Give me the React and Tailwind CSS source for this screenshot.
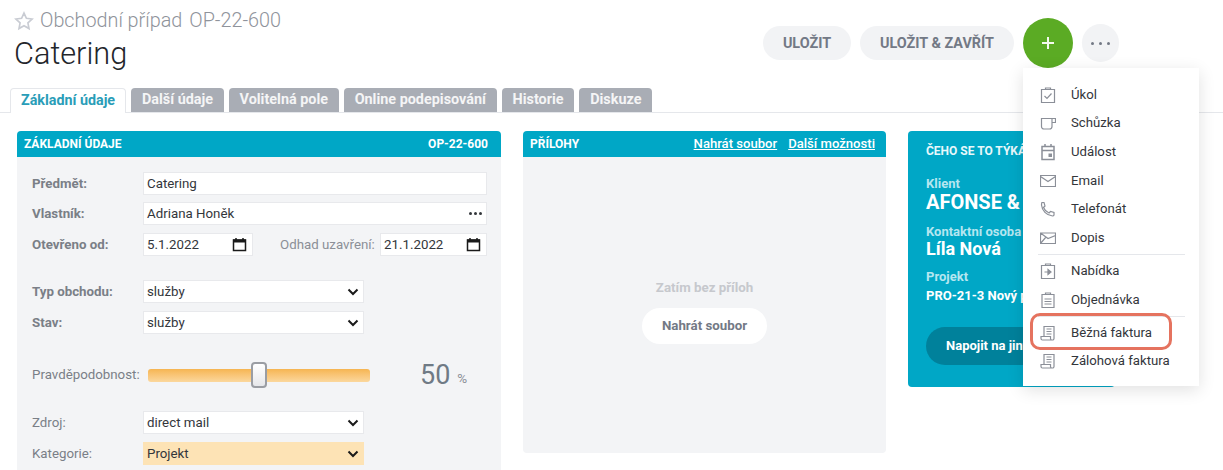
import React from 'react';

const tabs = ['Další údaje', 'Volitelná pole', 'Online podepisování', 'Historie', 'Diskuze'];

// menu icons, all drawn on the same 16x18 box
const Ico = ({ children }) => (
  <svg width="16" height="18" viewBox="0 0 16 18" fill="none" stroke="#8b8f98" strokeWidth="1.2">{children}</svg>
);
const IconTask = () => (
  <Ico>
    <path d="M1.500 3.500h13v13h-13zM5.500 3.500v-1.500h5v1.500" />
    <path d="M4.500 10l2.500 2.500 4.500-5" />
  </Ico>
);
const IconCup = () => (
  <Ico>
    <path d="M1.500 4.500h10.500v8a2.500 2.500 0 0 1-2.500 2.500h-5.500a2.500 2.500 0 0 1-2.500-2.500zM12 4.500h3.500v4h-3.500" />
  </Ico>
);
const IconEvent = () => (
  <Ico>
    <path d="M2 3.500h12v13h-12zM2 7.500h12M5 1v3M11 1v3" strokeWidth="1.500" />
    <rect x="8.500" y="10.500" width="3.500" height="3.500" fill="#8b8f98" stroke="none" />
  </Ico>
);
const IconMail = () => (
  <Ico>
    <path d="M.500 3.500h15v11h-15zM.500 4.500l7.500 5 7.500-5" />
  </Ico>
);
const IconPhone = () => (
  <Ico>
    <path d="M1.500 2.500h2.500l1 3.500-1.500 1.500c1 2.500 3 4.500 5.500 5.500l1.500-1.500 3.500 1v2.500c-.2.700-.8 1-1.500 1-6-.5-10.500-5.500-11-11 0-.7.200-1.800.500-2.500z" />
  </Ico>
);
const IconLetter = () => (
  <Ico>
    <path d="M.500 4h15v10.500h-15zM.500 4l7.500 5.500 7.500-3M.500 14.500l5.500-6.500" />
  </Ico>
);
const IconOffer = () => (
  <Ico>
    <path d="M1.500 3.500h13v13h-13zM5.500 3.500v-1.500h5v1.500" />
    <path d="M4.500 10h3.500M8 7.500l3 2.500-3 2.500z" fill="#8b8f98" />
  </Ico>
);
const IconOrder = () => (
  <Ico>
    <path d="M2 3.500h12v13h-12zM5.500 3.500v-1.500h5v1.500M4.500 8h7M4.500 10.500h7M4.500 13h7" />
  </Ico>
);
const IconInvoice = () => (
  <Ico>
    <path d="M4 12.500v-10h10v12a1.500 1.500 0 0 1-1.500 1.500h-10a1.500 1.500 0 0 1-1.500-1.500v-2h9.500v2a1.500 1.500 0 0 0 1.500 1.500" />
    <path d="M6.500 5h5M6.500 7.500h5M6.500 10h5" />
  </Ico>
);

const menu = [
  { label: 'Úkol', icon: IconTask },
  { label: 'Schůzka', icon: IconCup },
  { label: 'Událost', icon: IconEvent },
  { label: 'Email', icon: IconMail },
  { label: 'Telefonát', icon: IconPhone },
  { label: 'Dopis', icon: IconLetter, line: 'my-[2px]' },
  { label: 'Nabídka', icon: IconOffer },
  { label: 'Objednávka', icon: IconOrder, line: 'mt-[2px] mb-[1px]' },
  { label: 'Běžná faktura', icon: IconInvoice },
  { label: 'Zálohová faktura', icon: IconInvoice },
];

const Row = ({ label, bold, className, children }) => (
  <div className={`flex items-center ${className || ''}`}>
    <span className={`w-[111px] shrink-0 text-[13.3px] text-[#7a7f87] ${bold ? 'font-bold' : ''}`}>{label}</span>
    {children}
  </div>
);

const Box = ({ children, className }) => (
  <div className={`flex h-[23px] items-center justify-between border border-[#e8e9ec] bg-white pr-[3px] pl-[3px] text-[13.3px] text-[#33363b] ${className || ''}`}>
    {children}
  </div>
);

const Calendar = () => (
  <svg width="15" height="15" viewBox="0 0 15 15" className="mr-[2px]">
    <path d="M1.500 3h12v10.500h-12zM4 1v2M11 1v2" fill="none" stroke="#1a1a1a" strokeWidth="1.500" />
    <path d="M1 2.500h13v3h-13z" fill="#1a1a1a" />
  </svg>
);

const Select = ({ value, className }) => (
  <div className="relative w-[221px]">
    <select defaultValue={value} className={`block h-[23px] w-full appearance-none border border-[#e8e9ec] bg-white pl-[3px] text-[13.3px] text-[#33363b] ${className || ''}`}>
      <option>{value}</option>
    </select>
    <svg width="12" height="8" viewBox="0 0 12 8" className="pointer-events-none absolute top-[8px] right-[5px]">
      <path d="M1.500 1.500l4.500 4.500 4.500-4.500" fill="none" stroke="#1a1a1a" strokeWidth="2" />
    </svg>
  </div>
);

const Info = ({ label, className, children }) => (
  <div className={className}>
    <div className="text-[13px] leading-[14px] font-bold text-[#b5e6f0]">{label}</div>
    {children}
  </div>
);

export default function App() {
  return (
    <div className="relative h-[470px] w-[1223px] overflow-hidden bg-white font-['Roboto',sans-serif]">
      <div className="flex h-[88px] justify-between pr-[104px] pl-[14px]">
        <div>
          <div className="mt-[10px] flex h-[22px] items-center text-[19.800px] font-light text-[#8f939b]">
            <svg width="20" height="20" viewBox="0 0 24 24" fill="none" stroke="#c9ccd3" strokeWidth="2" className="mr-[6px]">
              <path d="M12 2.500l2.900 6.300 6.800.8-5 4.700 1.300 6.800-6-3.400-6 3.400 1.300-6.800-5-4.700 6.800-.8z" />
            </svg>
            <span>Obchodní případ</span>
            <span className="ml-[7px]">OP-22-600</span>
          </div>
          <h1 className="mt-[4px] text-[30.700px] leading-[36px] font-light text-[#23262b]">Catering</h1>
        </div>
        <div className="flex items-start pt-[18px]">
          <button className="mt-[8px] h-[34px] w-[88px] rounded-full bg-[#f2f3f5] pt-[1px] text-[14.4px] font-bold text-[#737985]">ULOŽIT</button>
          <button className="mt-[8px] ml-[9px] h-[34px] w-[154px] rounded-full bg-[#f2f3f5] pt-[1px] text-[14.4px] font-bold text-[#737985]">ULOŽIT &amp; ZAVŘÍT</button>
          <button className="ml-[9px] flex h-[50px] w-[50px] items-center justify-center rounded-full bg-[#5bab24]">
            <svg width="14" height="14" viewBox="0 0 14 14"><path d="M7 1v12M1 7h12" stroke="#f4faee" strokeWidth="2" /></svg>
          </button>
          <button className="mt-[6px] ml-[9px] flex h-[38px] w-[37px] items-center justify-center gap-[5px] rounded-full bg-[#f2f3f5]">
            <span className="h-[3px] w-[3px] rounded-full bg-[#737985]"></span>
            <span className="h-[3px] w-[3px] rounded-full bg-[#737985]"></span>
            <span className="h-[3px] w-[3px] rounded-full bg-[#737985]"></span>
          </button>
        </div>
      </div>

      <div className="flex h-[25px] items-end gap-[5px] border-b border-[#e5e7eb] pl-[10px]">
        <div className="-mb-px flex h-[25px] items-center rounded-t border border-b-0 border-[#e5e7eb] bg-white px-[10px] text-[14.3px] font-bold text-[#2a9db8]">Základní údaje</div>
        {tabs.map((t) => (
          <div key={t} className="flex h-[24px] items-center rounded-t bg-[#a9adb5] px-[10.800px] text-[14.4px] font-bold text-[#f5f5f6]">{t}</div>
        ))}
      </div>

      <div className="flex items-start pt-[18px] pl-[17px]">
        <section className="w-[484px] shrink-0">
          <div className="flex h-[26px] items-center justify-between rounded-t bg-[#00a7c6] pr-[13px] pl-[7px] text-[12px] font-bold text-white">
            <span>ZÁKLADNÍ ÚDAJE</span>
            <span>OP-22-600</span>
          </div>
          <div className="h-[340px] bg-[#f3f4f6] pt-[15px] pr-[14px] pl-[15px]">
            <Row label="Předmět:" bold><Box className="flex-1">Catering</Box></Row>
            <Row label="Vlastník:" bold className="mt-[7px]">
              <Box className="flex-1">
                <span>Adriana Honěk</span>
                <span className="mr-[1px] flex gap-[2px]">
                  <i className="h-[3px] w-[3px] rounded-full bg-[#33363b]"></i>
                  <i className="h-[3px] w-[3px] rounded-full bg-[#33363b]"></i>
                  <i className="h-[3px] w-[3px] rounded-full bg-[#33363b]"></i>
                </span>
              </Box>
            </Row>
            <Row label="Otevřeno od:" bold className="mt-[8px]">
              <Box className="w-[110px]">5.1.2022<Calendar /></Box>
              <span className="ml-[27px] w-[100px] shrink-0 text-[13.3px] whitespace-nowrap text-[#8b8f96]">Odhad uzavření:</span>
              <Box className="flex-1">21.1.2022<Calendar /></Box>
            </Row>
            <Row label="Typ obchodu:" bold className="mt-[24px]"><Select value="služby" /></Row>
            <Row label="Stav:" bold className="mt-[8px]"><Select value="služby" /></Row>
            <Row label="Pravděpodobnost:" className="mt-[27px]">
              <div className="relative ml-[5px] h-[26px] w-[222px] shrink-0">
                <div className="mt-[6.500px] h-[13px] rounded-[3px] bg-linear-to-b from-[#f6b551] to-[#fbd79c]"></div>
                <div className="absolute top-0 left-[103px] h-[26px] w-[16px] rounded-[4px] border-2 border-[#9a9da3] bg-linear-to-b from-white to-[#e6e7ea]"></div>
              </div>
              <span className="ml-[50px] text-[27px] leading-[28px] text-[#6f7a85]">50</span>
              <span className="mt-[6px] ml-[7px] text-[13.500px] text-[#8b8f96]">%</span>
            </Row>
            <Row label="Zdroj:" className="mt-[22px]"><Select value="direct mail" /></Row>
            <Row label="Kategorie:" className="mt-[8px]"><Select value="Projekt" className="border-[#fde3b5] !bg-[#fde3b5]" /></Row>
          </div>
        </section>

        <section className="ml-[22px] w-[363px] shrink-0">
          <div className="flex h-[26px] items-center justify-between rounded-t bg-[#00a7c6] pr-[11px] pl-[7px] text-[12px] font-bold text-white">
            <span>PŘÍLOHY</span>
            <span className="flex gap-[11px] text-[13.100px] font-medium underline">
              <span>Nahrát soubor</span>
              <span>Další možnosti</span>
            </span>
          </div>
          <div className="flex h-[296px] flex-col items-center rounded-b bg-[#f3f4f6] pt-[121px]">
            <div className="text-[13.300px] font-bold text-[#c6c8cd]">Zatím bez příloh</div>
            <button className="mt-[10px] h-[36px] w-[125px] rounded-full bg-white text-[13.300px] font-bold text-[#737985]">Nahrát soubor</button>
          </div>
        </section>

        <section className="ml-[22px] h-[256px] w-[207px] shrink-0 overflow-hidden rounded bg-[#00a7c6] pt-[13px] pl-[18px] whitespace-nowrap text-white">
          <div className="text-[12px] leading-[14px] font-bold text-[#e8f8fb]">ČEHO SE TO TÝKÁ</div>
          <Info label="Klient" className="mt-[19px]">
            <div className="text-[20px] leading-[22px] font-bold">AFONSE &amp; CO</div>
          </Info>
          <Info label="Kontaktní osoba" className="mt-[12px]">
            <div className="text-[18px] leading-[20px] font-bold">Líla Nová</div>
          </Info>
          <Info label="Projekt" className="mt-[11px]">
            <div className="mt-[4px] text-[13px] leading-[16px] font-bold">PRO-21-3 Nový projekt</div>
          </Info>
          <button className="mt-[23px] flex h-[38px] w-[170px] items-center rounded-full bg-[#00819b] pl-[20px] text-[13px] font-bold">Napojit na jiný</button>
        </section>
      </div>

      <div className="absolute top-[68px] left-[1023px] h-[318px] w-[176px] bg-white pt-[12.500px] pr-[14px] pl-[17px] shadow-[0_4px_16px_rgba(0,0,0,0.12)]">
        {menu.map((m) => (
          <div key={m.label}>
            <div className="flex h-[28.600px] items-center">
              <span className="flex w-[31px] shrink-0"><m.icon /></span>
              <span className="text-[13.200px] text-[#33363b]">{m.label}</span>
            </div>
            {m.line && <div className={`${m.line} -ml-[2px] h-px bg-[#e5e7eb]`}></div>}
          </div>
        ))}
      </div>
      <div className="absolute top-[313px] left-[1030px] h-[37px] w-[142px] rounded-[10px] border-[3px] border-[#e5735f]"></div>
    </div>
  );
}
